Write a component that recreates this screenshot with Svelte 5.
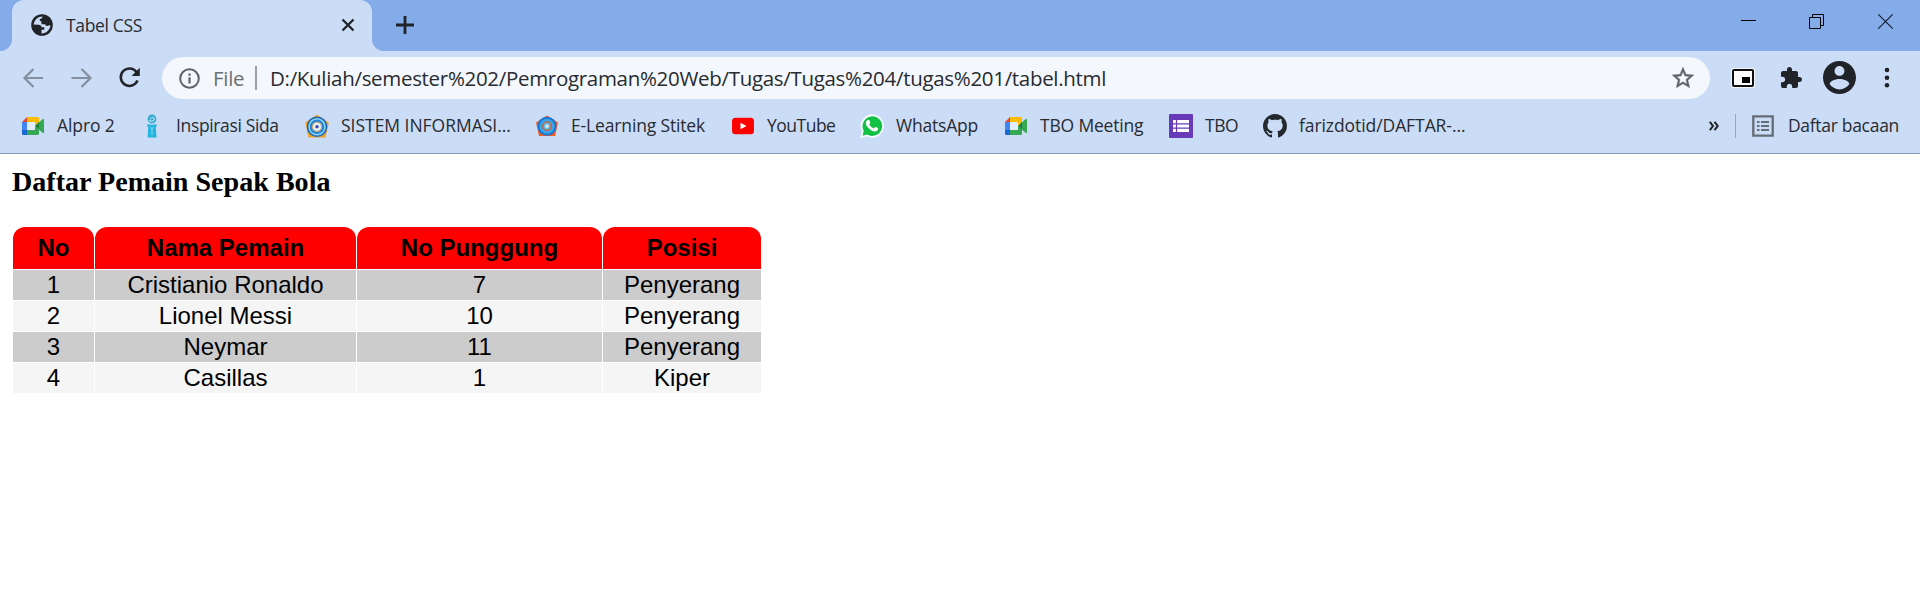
<script>
  const bookmarks = [
    { icon: 'meet', label: 'Alpro 2', width: 119, track: -0.1 },
    { icon: 'inspirasi', label: 'Inspirasi Sida', width: 165, track: -0.36 },
    { icon: 'sistem', label: 'SISTEM INFORMASI...', width: 230, track: -0.02 },
    { icon: 'stitek', label: 'E-Learning Stitek', width: 196, track: -0.15 },
    { icon: 'youtube', label: 'YouTube', width: 129, track: -0.5 },
    { icon: 'whatsapp', label: 'WhatsApp', width: 144, track: -0.2 },
    { icon: 'meet', label: 'TBO Meeting', width: 165, track: -0.18 },
    { icon: 'forms', label: 'TBO', width: 94, track: -0.45 },
    { icon: 'github', label: 'farizdotid/DAFTAR-...', width: 210, track: -0.08 }
  ];
  const headers = ['No', 'Nama Pemain', 'No Punggung', 'Posisi'];
  const players = [
    [1, 'Cristianio Ronaldo', 7, 'Penyerang'],
    [2, 'Lionel Messi', 10, 'Penyerang'],
    [3, 'Neymar', 11, 'Penyerang'],
    [4, 'Casillas', 1, 'Kiper']
  ];
</script>

<div class="window">
  <header class="titlebar">
    <div class="tab">
      <svg class="globe" width="22" height="22" viewBox="0 0 22 22">
        <circle cx="11" cy="11" r="10.8" fill="#202327" />
        <path d="M11.500 2.500C7 2.500 3.500 5.500 2.600 10.500L7.500 10.800C9.300 10.900 10.600 11.600 10.600 13.300H13.300V15.800H10.500V19.400C15.500 19.500 19.400 15.500 19.400 11L16.500 12C15 12 14.200 11.300 14.200 10.300H10.500V7.800C10 6.800 8.500 7 8.500 6C8.500 5 11.500 4.800 11.500 2.500Z" fill="#cbdcf7" />
      </svg>
      <span class="tab-title">Tabel CSS</span>
      <svg class="tab-close" width="14" height="14" viewBox="0 0 14 14"><path d="M1.500 1.500 12.500 12.500M12.500 1.500 1.500 12.500" stroke="#202327" stroke-width="2.300" /></svg>
    </div>
    <svg class="new-tab" width="18" height="18" viewBox="0 0 18 18"><path d="M9 0V18M0 9H18" stroke="#202327" stroke-width="2.8" /></svg>
    <div class="controls">
      <svg width="15" height="15" viewBox="0 0 15 15"><path d="M0 6.500H15" stroke="#000" /></svg>
      <svg width="15" height="15" viewBox="0 0 15 15"><path d="M.5 3.500H11.500V14.500H.5ZM3.500 3.500V.5H14.500V11.500H11.500" fill="none" stroke="#000" /></svg>
      <svg class="window-close" width="15" height="15" viewBox="0 0 15 15"><path d="M.3.3 14.700 14.700M14.700.3.3 14.700" stroke="#111a28" stroke-width="1.100" /></svg>
    </div>
  </header>

  <div class="toolbar">
    <div class="nav">
      <svg width="21" height="20" viewBox="0 0 21 20"><path d="M20 10H2M10.500 1 1.500 10l9 9" fill="none" stroke="#858f9f" stroke-width="2.200" /></svg>
      <svg width="21" height="20" viewBox="0 0 21 20"><path d="M.5 10H19M10.500 1l9 9-9 9" fill="none" stroke="#858f9f" stroke-width="2.200" /></svg>
      <svg width="21" height="21" viewBox="0 0 21 21"><path d="M17.800 5.500A8.700 8.700 0 1 0 18.500 13.500" fill="none" stroke="#202327" stroke-width="2.500" /><path d="M20.800.8V9H12.600Z" fill="#202327" /></svg>
    </div>
    <div class="address">
      <svg width="21" height="21" viewBox="0 0 21 21"><circle cx="10.500" cy="10.500" r="9.300" fill="none" stroke="#5f6368" stroke-width="2" /><path d="M9.400 9.300h2.200v6.200H9.400ZM9.400 5.500h2.200v2.200H9.400Z" fill="#5f6368" /></svg>
      <span class="scheme">File</span>
      <span class="rule"></span>
      <span class="url">D:/Kuliah/semester%202/Pemrograman%20Web/Tugas/Tugas%204/tugas%201/tabel.html</span>
      <svg class="star" width="26" height="26" viewBox="0 0 24 24"><path fill="#5f6368" stroke="#5f6368" stroke-width=".4" d="M22 9.240l-7.190-.62L12 2 9.190 8.630 2 9.240l5.460 4.730L5.820 21 12 17.270 18.180 21l-1.630-7.030L22 9.240zM12 15.400l-3.760 2.270 1-4.280-3.320-2.880 4.380-.38L12 6.100l1.710 4.040 4.380.38-3.320 2.880 1 4.280L12 15.400z" /></svg>
    </div>
    <div class="actions">
      <svg width="24" height="20" viewBox="0 0 24 20"><rect width="24" height="20" rx="2" fill="#f1f5fb" /><rect x="2" y="2" width="20" height="16" rx="1" fill="#fff" stroke="#111" stroke-width="2" /><path d="M11 9h8v6h-8z" fill="#000" /></svg>
      <svg width="24" height="24" viewBox="0 0 24 24"><path fill="#202327" d="M20.500 11H19V7c0-1.100-.9-2-2-2h-4V3.500C13 2.120 11.880 1 10.500 1S8 2.120 8 3.500V5H4c-1.100 0-1.990.9-1.990 2v3.800H3.500c1.490 0 2.700 1.210 2.700 2.700s-1.210 2.700-2.700 2.700H2V20c0 1.100.9 2 2 2h3.800v-1.500c0-1.490 1.210-2.700 2.700-2.700 1.490 0 2.700 1.210 2.700 2.700V22H17c1.100 0 2-.9 2-2v-4h1.500c1.380 0 2.500-1.120 2.500-2.500S21.880 11 20.500 11z" /></svg>
      <svg width="33" height="33" viewBox="2 2 20 20"><path fill="#202327" d="M12 2C6.480 2 2 6.480 2 12s4.480 10 10 10 10-4.480 10-10S17.520 2 12 2zm0 3c1.660 0 3 1.340 3 3s-1.340 3-3 3-3-1.340-3-3 1.340-3 3-3zm0 14.200c-2.500 0-4.710-1.280-6-3.220.03-1.990 4-3.080 6-3.080 1.990 0 5.970 1.090 6 3.080-1.290 1.940-3.500 3.220-6 3.220z" /></svg>
      <svg width="6" height="22" viewBox="0 0 6 22"><g fill="#202327"><circle cx="3" cy="3" r="2.300" /><circle cx="3" cy="10.700" r="2.300" /><circle cx="3" cy="18.300" r="2.300" /></g></svg>
    </div>
  </div>

  <nav class="bookmarks">
    {#each bookmarks as item}
      <div class="bookmark" style:width="{item.width}px">
        <svg width="24" height="24" viewBox="0 0 24 24">
          {#if item.icon === 'meet'}
            <path d="M1 8 6 3v5Z" fill="#ea4335" />
            <path d="M1 8h5v8H1Z" fill="#4285f4" />
            <path d="M1 16h5v5H2.500Q1 21 1 19.500Z" fill="#1967d2" />
            <path d="M6 3h10.500Q18 3 18 4.500V8l-4 4V8H6Z" fill="#fbbc04" />
            <path d="M6 8h8v8H6Z" fill="#e3ecfb" />
            <path d="M6 16h8v-4l4 3v4.500Q18 21 16.500 21H6ZM17 9l5-4q1-.6 1 .5v13q0 1-1 .5l-5-4Z" fill="#34a853" />
            <path d="M14 12l4-4v7Z" fill="#188038" />
          {:else if item.icon === 'inspirasi'}
            <circle cx="12" cy="5" r="4.400" fill="#2fa9cf" />
            <path d="M9 6.500q3.500 2 5-.5t-2.500-2.500q-2 1-.5 2" fill="none" stroke="#d9eefa" stroke-width="1" />
            <path d="M7.500 10q4.500 1.500 9 0v3h-.8l.9 10.500H7.600L8.300 13H7.500Z" fill="#22b5e0" />
            <path d="M10.500 13l1.500 2 1.800-2M12 15v6" fill="none" stroke="#8bd6ef" />
          {:else if item.icon === 'sistem'}
            <path d="M12 .5 23.800 8.500 20.500 23.500h-17L.2 8.500Z" fill="#f3a125" />
            <circle cx="12" cy="12.800" r="10.300" fill="#1768bd" />
            <circle cx="12" cy="12.800" r="8" fill="#1f86df" stroke="#8fd3f5" stroke-width="1.500" />
            <circle cx="12" cy="12.800" r="4.600" fill="#e4f3fa" stroke="#c5a66e" stroke-width="1.300" />
            <circle cx="12" cy="12.800" r="1.700" fill="#3844aa" />
          {:else if item.icon === 'stitek'}
            <path d="M12 1.500 23 8.500 20 22H4L1 8.500Z" fill="#f25a20" />
            <circle cx="12" cy="12.200" r="9.500" fill="#1976d2" />
            <circle cx="12" cy="12.200" r="7.500" fill="#38a6ed" />
            <circle cx="12" cy="12.200" r="4.200" fill="#64bdea" stroke="#bd6848" stroke-width="1.700" />
            <circle cx="12" cy="12.200" r="1.700" fill="#d6e9ef" />
          {:else if item.icon === 'youtube'}
            <rect x="1" y="3.800" width="22" height="16.400" rx="3.500" fill="#f00" />
            <path d="M9.500 8.700 15.500 12l-6 3.300Z" fill="#fff" />
          {:else if item.icon === 'whatsapp'}
            <path d="M.3 24 2 17.500A11.600 11.600 0 1 1 6.800 22.300Z" fill="#f8fcff" />
            <path d="M2.500 21.800 3.800 17A9.800 9.800 0 1 1 7.200 20.500Z" fill="#10c143" />
            <path d="M7.300 6.300q1.500-1.300 2.200.3l.8 2q.1.700-1 1.800 1.500 2.800 4.500 4 1.300-1.700 1.900-1.400l2.200 1.100q1 .7-.6 2.500-2.500 2-6.500-.7-5.400-3.700-5-7.200.2-1.500 1.500-2.400Z" fill="#fff" />
          {:else if item.icon === 'forms'}
            <rect width="24" height="24" rx="1" fill="#673ab7" />
            <path d="M4 6h16v12H4Z" fill="#fff" />
            <path d="M4 9.800h16M4 14.200h16M7.500 6v12" stroke="#673ab7" stroke-width="1.200" />
          {:else}
            <path fill="#24292e" transform="scale(1.5)" d="M8 0C3.580 0 0 3.580 0 8c0 3.540 2.290 6.530 5.470 7.590.4.070.55-.17.55-.38 0-.19-.01-.82-.01-1.490-2.010.37-2.530-.49-2.690-.94-.09-.23-.48-.94-.82-1.130-.28-.15-.68-.52-.01-.53.63-.01 1.080.58 1.230.82.72 1.210 1.870.87 2.330.66.07-.52.28-.87.51-1.070-1.780-.2-3.640-.89-3.640-3.950 0-.87.31-1.590.82-2.150-.08-.2-.36-1.020.08-2.120 0 0 .67-.21 2.200.82.64-.18 1.320-.27 2-.27s1.360.09 2 .27c1.530-1.040 2.200-.82 2.200-.82.44 1.100.16 1.920.08 2.120.51.56.82 1.270.82 2.150 0 3.070-1.870 3.750-3.650 3.950.29.25.54.73.54 1.480 0 1.070-.01 1.930-.01 2.200 0 .21.15.46.55.38A8.010 8.010 0 0 0 16 8c0-4.420-3.580-8-8-8z" />
          {/if}
        </svg>
        <span style:letter-spacing="{item.track}px">{item.label}</span>
      </div>
    {/each}
    <div class="reading">
      <svg width="10" height="10" viewBox="0 0 10 10"><path d="M.8.8 4 5 .8 9.200M5.500.8 8.700 5 5.500 9.200" fill="none" stroke="#202327" stroke-width="2" /></svg>
      <span class="divider"></span>
      <svg class="list" width="22" height="22" viewBox="0 0 22 22"><path d="M1.300 1.300h19.400v19.400H1.300Z" fill="none" stroke="#666c76" stroke-width="2.300" /><path d="M5 7h2.500M9 7h8M5 11h2.500M9 11h8M5 15h2.500M9 15h8" stroke="#666c76" stroke-width="2" /></svg>
      <span class="reading-label">Daftar bacaan</span>
    </div>
  </nav>

  <main>
    <h3>Daftar Pemain Sepak Bola</h3>
    <table>
      <colgroup><col class="c1" /><col class="c2" /><col class="c3" /><col class="c4" /></colgroup>
      <thead><tr>{#each headers as title}<th>{title}</th>{/each}</tr></thead>
      <tbody>
        {#each players as row}
          <tr>{#each row as cell}<td>{cell}</td>{/each}</tr>
        {/each}
      </tbody>
    </table>
  </main>
</div>

<style>
  :global(body) { margin: 0; background: #fff; overflow: hidden; }
  .window { width: 1920px; height: 608px; overflow: hidden; background: #fff; color: #282b30; font-family: "Open Sans", "Noto Sans", sans-serif; font-weight: 400; }
  svg { display: block; flex: none; overflow: visible; }
  span { white-space: nowrap; }
  .titlebar { height: 51px; display: flex; background: #84ace9; padding-left: 12px; box-sizing: border-box; }
  .tab { position: relative; width: 360px; height: 51px; box-sizing: border-box; padding: 0 17px 1px 19px; display: flex; align-items: center; background: #cbdcf7; border-radius: 12px 12px 0 0; }
  .tab::before, .tab::after { content: ""; position: absolute; bottom: 0; width: 12px; height: 12px; }
  .tab::before { left: -12px; background: radial-gradient(circle at 0 0, transparent 11.5px, #cbdcf7 12.5px); }
  .tab::after { right: -12px; background: radial-gradient(circle at 100% 0, transparent 11.5px, #cbdcf7 12.5px); }
  .tab-title { margin-left: 13px; padding-bottom: 1px; font-size: 17.5px; letter-spacing: -0.35px; }
  .tab-close { margin-left: auto; }
  .new-tab { margin: 16px 0 0 24px; }
  .controls { display: flex; gap: 53px; margin: 14px 27px 0 auto; }
  .window-close { margin-left: 1px; }
  .toolbar { height: 57px; display: flex; align-items: flex-start; padding: 6px 30px 0 23px; box-sizing: border-box; background: #cbdcf7; }
  .nav { height: 41px; width: 139px; display: flex; gap: 27px; align-items: center; }
  .address { width: 1548px; height: 42px; box-sizing: border-box; padding: 0 14px 0 17px; border-radius: 21px; background: #f4f8fd; display: flex; align-items: center; }
  .scheme { margin-left: 13px; width: 42px; font-size: 20.5px; letter-spacing: -0.3px; color: #6b6f75; }
  .rule { width: 2px; height: 24px; background: #9aa0a6; }
  .url { margin-left: 13px; font-size: 20.5px; letter-spacing: -0.31px; }
  .star { margin-left: auto; }
  .actions { height: 41px; flex: 1; display: flex; align-items: center; margin-left: 21px; }
  .actions svg:nth-child(2) { margin-left: 24px; }
  .actions svg:nth-child(3) { margin-left: 20px; }
  .actions svg:nth-child(4) { margin-left: 28px; }
  .bookmarks { height: 46px; box-sizing: border-box; padding: 0 21px 9px; border-bottom: 1px solid #8799b7; display: flex; align-items: center; background: #cbdcf7; font-size: 17.5px; }
  .bookmark { display: flex; align-items: center; gap: 12px; flex: none; }
  .bookmark span, .reading-label { padding-bottom: 2px; }
  .reading { display: flex; align-items: center; margin-left: auto; }
  .divider { width: 1px; height: 24px; margin: 0 16px; background: #98a7bf; }
  .reading-label { margin-left: 14px; letter-spacing: -0.3px; }
  main { padding: 12px 13px 0; color: #000; }
  h3 { margin: 0 0 0 -1px; font: bold 28.08px/32px "Liberation Serif", serif; }
  table { margin-top: 28px; width: 750px; table-layout: fixed; border-spacing: 1px; font: 24px/27px "Liberation Sans", Arial, sans-serif; text-align: center; margin-left: -1px; }
  .c1 { width: 81px; } .c2 { width: 261px; } .c3 { width: 245px; } .c4 { width: 158px; }
  th { height: 42px; padding: 0 0 2px; box-sizing: border-box; background: #f00; border-radius: 12px 12px 0 0; }
  td { height: 30px; padding: 0 0 2px; box-sizing: border-box; }
  tbody tr:nth-child(odd) td { background: #ccc; }
  tbody tr:nth-child(even) td { background: #f5f5f5; }
</style>
